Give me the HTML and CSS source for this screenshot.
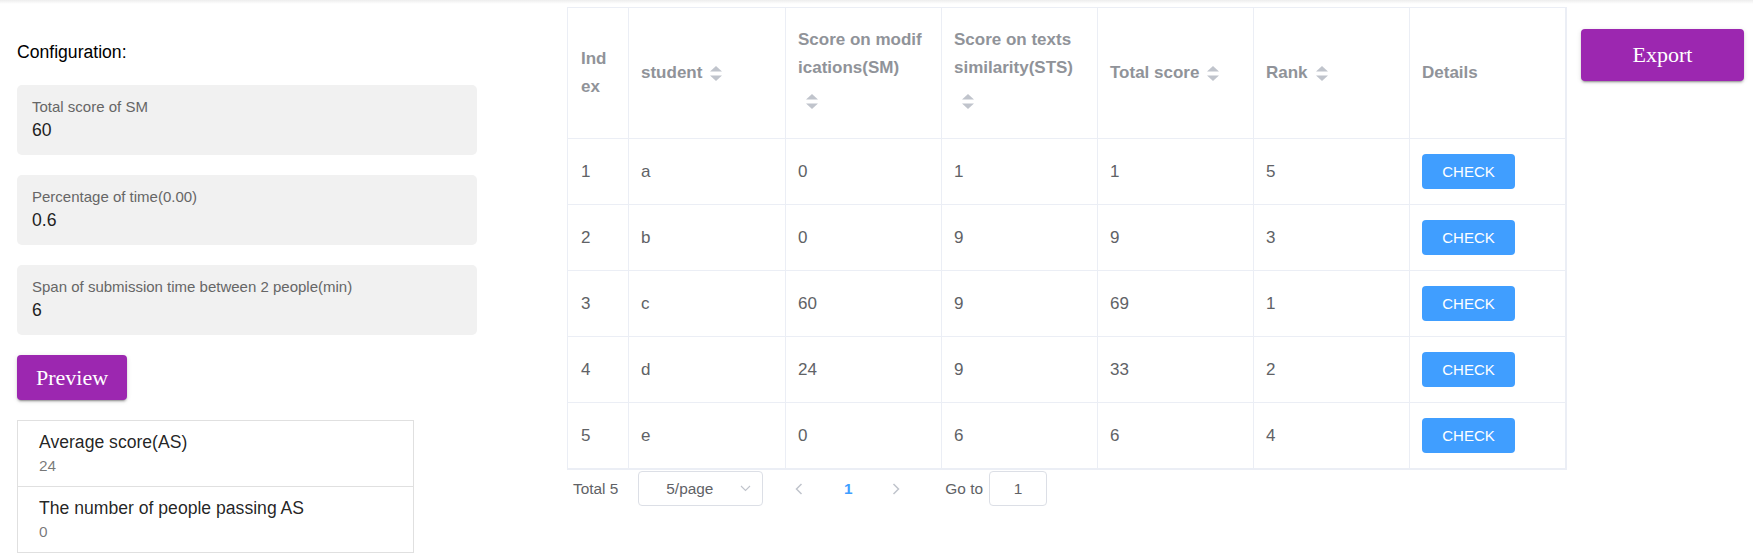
FILE: index.html
```html
<!DOCTYPE html>
<html>
<head>
<meta charset="utf-8">
<title>Scores</title>
<link rel="stylesheet" href="styles.css">
</head>
<body>
<div class="topbar"></div>
<div class="page">
  <aside class="config">
    <div class="config-title">Configuration:</div>
    <div class="field">
      <div class="field-label">Total score of SM</div>
      <div class="field-value">60</div>
    </div>
    <div class="field">
      <div class="field-label">Percentage of time(0.00)</div>
      <div class="field-value">0.6</div>
    </div>
    <div class="field">
      <div class="field-label">Span of submission time between 2 people(min)</div>
      <div class="field-value">6</div>
    </div>
    <button class="btn-purple preview">Preview</button>
    <ul class="stats">
      <li class="stat">
        <div class="stat-primary">Average score(AS)</div>
        <div class="stat-secondary">24</div>
      </li>
      <li class="stat">
        <div class="stat-primary">The number of people passing AS</div>
        <div class="stat-secondary">0</div>
      </li>
    </ul>
  </aside>

  <section class="table-wrap">
    <table class="score-table">
      <colgroup>
        <col class="col-index">
        <col class="col-student">
        <col class="col-std">
        <col class="col-std">
        <col class="col-std">
        <col class="col-std">
        <col class="col-std">
      </colgroup>
      <thead>
        <tr>
          <th>Index</th>
          <th>student<span class="sort"><svg width="12" height="15" viewBox="0 0 12 15"><path d="M0 5.5 L6 0 L12 5.5Z" fill="#c0c4cc"/><path d="M0 9.5 L12 9.5 L6 15Z" fill="#c0c4cc"/></svg></span></th>
          <th>Score on modifications(SM)<span class="sort sort--below"><svg width="12" height="15" viewBox="0 0 12 15"><path d="M0 5.5 L6 0 L12 5.5Z" fill="#c0c4cc"/><path d="M0 9.5 L12 9.5 L6 15Z" fill="#c0c4cc"/></svg></span></th>
          <th>Score on texts similarity(STS)<span class="sort sort--below"><svg width="12" height="15" viewBox="0 0 12 15"><path d="M0 5.5 L6 0 L12 5.5Z" fill="#c0c4cc"/><path d="M0 9.5 L12 9.5 L6 15Z" fill="#c0c4cc"/></svg></span></th>
          <th>Total score<span class="sort"><svg width="12" height="15" viewBox="0 0 12 15"><path d="M0 5.5 L6 0 L12 5.5Z" fill="#c0c4cc"/><path d="M0 9.5 L12 9.5 L6 15Z" fill="#c0c4cc"/></svg></span></th>
          <th>Rank<span class="sort"><svg width="12" height="15" viewBox="0 0 12 15"><path d="M0 5.5 L6 0 L12 5.5Z" fill="#c0c4cc"/><path d="M0 9.5 L12 9.5 L6 15Z" fill="#c0c4cc"/></svg></span></th>
          <th>Details</th>
        </tr>
      </thead>
      <tbody>
        <tr><td>1</td><td>a</td><td>0</td><td>1</td><td>1</td><td>5</td><td><button class="check">CHECK</button></td></tr>
        <tr><td>2</td><td>b</td><td>0</td><td>9</td><td>9</td><td>3</td><td><button class="check">CHECK</button></td></tr>
        <tr><td>3</td><td>c</td><td>60</td><td>9</td><td>69</td><td>1</td><td><button class="check">CHECK</button></td></tr>
        <tr><td>4</td><td>d</td><td>24</td><td>9</td><td>33</td><td>2</td><td><button class="check">CHECK</button></td></tr>
        <tr><td>5</td><td>e</td><td>0</td><td>6</td><td>6</td><td>4</td><td><button class="check">CHECK</button></td></tr>
      </tbody>
    </table>
    <div class="pager">
      <span class="pager-total">Total 5</span>
      <div class="size-select">
        <span class="select-text">5/page</span>
        <svg class="select-arrow" width="11" height="7" viewBox="0 0 11 7"><polyline points="1,1 5.5,5.5 10,1" fill="none" stroke="#c0c4cc" stroke-width="1.1"/></svg>
      </div>
      <span class="pager-btn pager-prev"><svg width="8" height="12" viewBox="0 0 8 12"><polyline points="6.5,1 1.5,6 6.5,11" fill="none" stroke="#c0c4cc" stroke-width="1.5"/></svg></span>
      <span class="pager-num">1</span>
      <span class="pager-btn pager-next"><svg width="8" height="12" viewBox="0 0 8 12"><polyline points="1.5,1 6.5,6 1.5,11" fill="none" stroke="#c0c4cc" stroke-width="1.5"/></svg></span>
      <span class="pager-goto">Go to</span>
      <div class="goto-input">1</div>
    </div>
  </section>

  <button class="btn-purple export">Export</button>
</div>
</body>
</html>
```

FILE: styles.css
```css
* { box-sizing: border-box; }

html, body {
  margin: 0;
  padding: 0;
  background: #fff;
}

body {
  font-family: "Liberation Sans", Arial, sans-serif;
  color: #212121;
  height: 553px;
  overflow: hidden;
}

.topbar {
  height: 4px;
  background: linear-gradient(rgba(0, 0, 0, 0.07), rgba(0, 0, 0, 0));
}

.page {
  display: flex;
  align-items: flex-start;
  padding: 3px 0 0 17px;
}

/* ---------- left configuration column ---------- */
.config {
  width: 460px;
  flex: none;
  padding-top: 35px;
}

.config-title {
  font-size: 17.6px;
  line-height: 20px;
  color: #000;
  margin-bottom: 23px;
}

.field {
  height: 70px;
  background: #f1f1f1;
  border-radius: 5px;
  padding: 13px 15px 0;
  margin-bottom: 20px;
}

.field-label {
  font-size: 15px;
  line-height: 18px;
  color: #666;
}

.field-value {
  font-size: 17.6px;
  line-height: 20px;
  margin-top: 4px;
  color: #1e1e1e;
}

.btn-purple {
  display: block;
  padding: 0;
  border: 0;
  border-radius: 4px;
  background: #9c27b0;
  color: #fff;
  font-family: "Liberation Serif", "Times New Roman", serif;
  font-size: 22px;
  box-shadow: 0 3px 1px -2px rgba(0, 0, 0, 0.2), 0 2px 2px 0 rgba(0, 0, 0, 0.14), 0 1px 5px 0 rgba(0, 0, 0, 0.12);
  cursor: pointer;
}

.preview {
  width: 110px;
  height: 45px;
  margin-bottom: 20px;
}

.stats {
  list-style: none;
  margin: 0;
  padding: 0 0 10px;
  width: 397px;
  border: 1px solid #e0e0e0;
  border-bottom: 0;
}

.stat {
  padding: 8px 21px 9px;
  border-bottom: 1px solid #e0e0e0;
}

.stat-primary {
  font-size: 17.6px;
  line-height: 26px;
  color: rgba(0, 0, 0, 0.87);
}

.stat-secondary {
  font-size: 15.4px;
  line-height: 22px;
  color: rgba(0, 0, 0, 0.54);
}

/* ---------- table ---------- */
.table-wrap {
  flex: none;
  width: 1000px;
  margin-left: 90px;
}

.score-table {
  width: 1000px;
  table-layout: fixed;
  border-collapse: separate;
  border-spacing: 0;
  border: 1px solid #ebeef5;
}

.col-index { width: 61px; }
.col-student { width: 157px; }
.col-std { width: 156px; }

.score-table th,
.score-table td {
  padding: 0 18px 0 12px;
  border-right: 1px solid #ebeef5;
  border-bottom: 1px solid #ebeef5;
  text-align: left;
  vertical-align: middle;
}

.score-table th:first-child,
.score-table td:first-child {
  padding-left: 13px;
}

.score-table thead tr { height: 131px; }
.score-table tbody tr { height: 66px; }

.score-table th {
  font-size: 17px;
  font-weight: bold;
  line-height: 28px;
  color: #909399;
  word-break: break-all;
}

.score-table td {
  font-size: 17px;
  line-height: 24px;
  color: #606266;
}

.sort {
  display: inline-flex;
  align-items: center;
  width: 26px;
  height: 37px;
  padding-left: 8px;
  vertical-align: middle;
}

.sort--below {
  display: flex;
  height: 38px;
}

.check {
  display: inline-block;
  vertical-align: middle;
  width: 93px;
  height: 35px;
  padding: 0;
  border: 0;
  border-radius: 4px;
  background: #409eff;
  color: #fff;
  font-family: "Liberation Sans", Arial, sans-serif;
  font-size: 15px;
  cursor: pointer;
}

/* ---------- pagination ---------- */
.pager {
  display: flex;
  align-items: center;
  height: 35px;
  margin-top: 1px;
  padding-left: 6px;
  font-size: 15.4px;
  color: #606266;
}

.pager-total {
  margin-right: 20px;
}

.size-select {
  display: flex;
  align-items: center;
  width: 125px;
  height: 35px;
  border: 1px solid #dcdfe6;
  border-radius: 4px;
}

.select-text {
  flex: 1;
  text-align: center;
}

.select-arrow {
  margin-right: 11px;
}

.pager-btn {
  display: flex;
  align-items: center;
  justify-content: center;
  width: 40px;
  height: 35px;
}

.pager-prev { margin-left: 16px; }
.pager-next { margin-left: 8px; }

.pager-num {
  width: 40px;
  margin-left: 9px;
  text-align: center;
  font-weight: bold;
  font-size: 15.4px;
  color: #409eff;
}

.pager-goto {
  margin-left: 29px;
}

.goto-input {
  display: flex;
  align-items: center;
  justify-content: center;
  width: 58px;
  height: 35px;
  margin-left: 6px;
  border: 1px solid #dcdfe6;
  border-radius: 4px;
}

/* ---------- export ---------- */
.export {
  flex: none;
  width: 163px;
  height: 52px;
  margin-left: 14px;
  margin-top: 22px;
}
```
